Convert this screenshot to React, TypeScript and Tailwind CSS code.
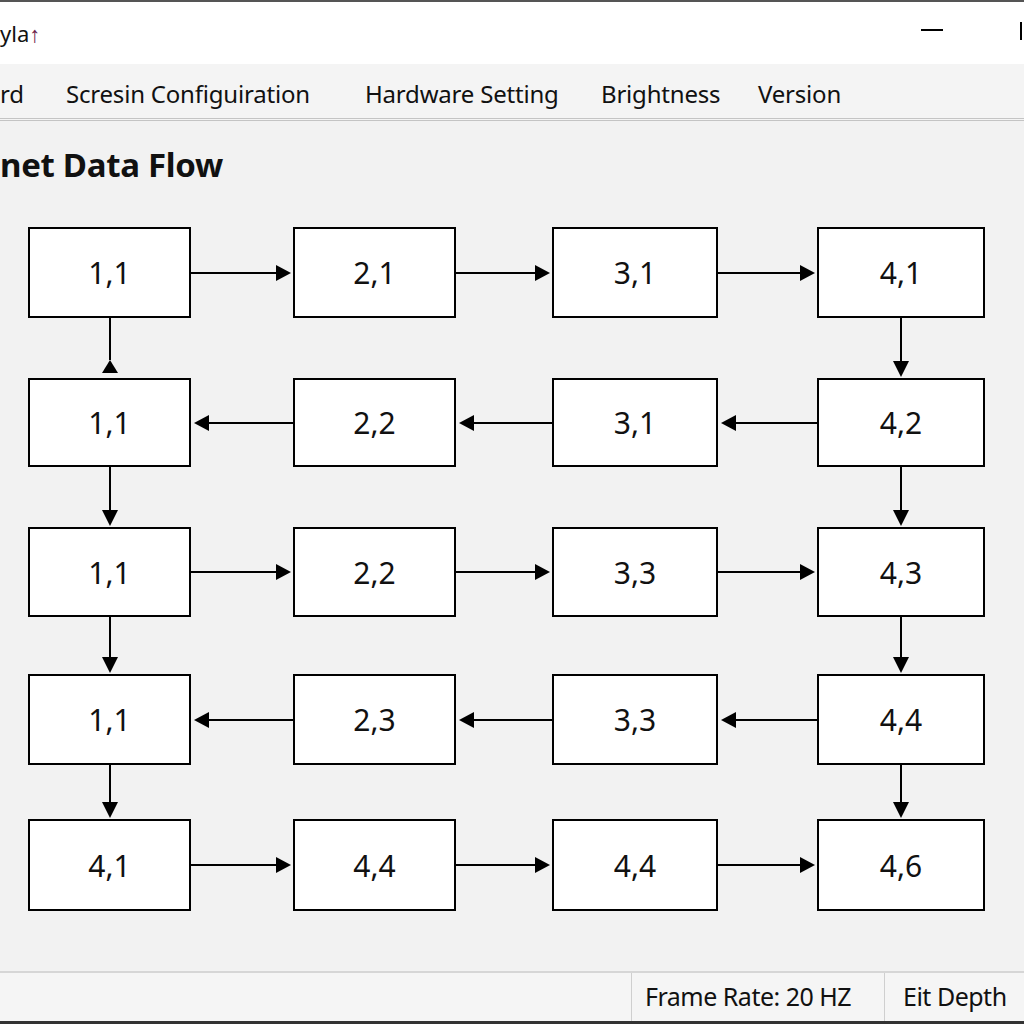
import React from 'react';

type Dir = 'left' | 'right' | 'down' | 'up' | 'none';

// 5 rows x 4 columns of cells, with the arrow between neighbours
const ROWS = [
  { cells: ['1,1', '2,1', '3,1', '4,1'], flow: 'right' as Dir },
  { cells: ['1,1', '2,2', '3,1', '4,2'], flow: 'left' as Dir },
  { cells: ['1,1', '2,2', '3,3', '4,3'], flow: 'right' as Dir },
  { cells: ['1,1', '2,3', '3,3', '4,4'], flow: 'left' as Dir },
  { cells: ['4,1', '4,4', '4,4', '4,6'], flow: 'right' as Dir },
];

// vertical links below each row: [first column, last column]
const LINKS: [Dir, Dir][] = [
  ['up', 'down'],
  ['down', 'down'],
  ['down', 'down'],
  ['down', 'down'],
];

const ROW_H = ['h-[91px]', 'h-[89px]', 'h-[90px]', 'h-[91px]', 'h-[92px]'];
const GAP_H = ['h-[60px]', 'h-[60px]', 'h-[57px]', 'h-[54px]'];

function HArrow({ dir }: { dir: Dir }) {
  return (
    <div className="flex items-center h-full">
      {dir === 'left' && (
        <div className="w-0 h-0 border-y-[8px] border-y-transparent border-r-[15px] border-r-black ml-[3px]" />
      )}
      <div className="flex-1 h-[2px] bg-black" />
      {dir === 'right' && (
        <div className="w-0 h-0 border-y-[8px] border-y-transparent border-l-[15px] border-l-black mr-[2px]" />
      )}
    </div>
  );
}

function VArrow({ dir }: { dir: Dir }) {
  return (
    <div className="flex flex-col items-center h-full">
      <div className="flex-1 w-[2px] bg-black" />
      {dir === 'up' && (
        <div className="w-0 h-0 border-x-[8px] border-x-transparent border-b-[13px] border-b-black mb-[5px]" />
      )}
      {dir === 'down' && (
        <div className="w-0 h-0 border-x-[8px] border-x-transparent border-t-[16px] border-t-black mb-[1px]" />
      )}
    </div>
  );
}

function Cell({ label }: { label: string }) {
  return (
    <div className="h-full bg-white border-2 border-black flex items-center justify-center text-[30px] text-[#111]">
      {label}
    </div>
  );
}

export default function App() {
  return (
    <div className="w-[1024px] h-[1024px] overflow-hidden flex flex-col bg-[#f2f2f2] font-['Noto_Sans',sans-serif] text-[#111]">
      {/* title bar */}
      <div className="h-[64px] bg-white border-t-2 border-[#555] flex items-center shrink-0">
        <span className="text-[22px] leading-none -mt-[1px]">
          yla<span className="text-[#6b1d4a]">↑</span>
        </span>
        <div className="ml-auto flex items-center">
          <div className="w-[22px] h-[2px] bg-black mr-[77px] -mt-[6px]" />
          <div className="w-[4px] h-[18px] border-l-2 border-black -mt-[4px]" />
        </div>
      </div>

      {/* menu bar */}
      <div className="h-[57px] pt-[5px] bg-[#f4f4f4] border-b-[3px] border-double border-[#c4c4c4] shrink-0 grid grid-cols-[66px_299px_236px_157px_auto] items-center text-[24px] tracking-[-0.2px]">
        <span>rd</span>
        <span>Scresin Configuiration</span>
        <span>Hardware Setting</span>
        <span>Brightness</span>
        <span>Version</span>
      </div>

      {/* data flow panel */}
      <div className="flex-1 flex flex-col">
        <h1 className="text-[33px] font-bold leading-none pt-[27px] tracking-[-0.3px]">net Data Flow</h1>

        <div className="mt-[46px] ml-[28px] grid grid-cols-[163px_102px_163px_96px_166px_99px_168px]">
          {ROWS.map((row, r) => (
            <React.Fragment key={r}>
              {row.cells.map((c, i) => (
                <React.Fragment key={i}>
                  <div className={ROW_H[r]}>
                    <Cell label={c} />
                  </div>
                  {i < 3 && (
                    <div className={ROW_H[r]}>
                      <HArrow dir={row.flow} />
                    </div>
                  )}
                </React.Fragment>
              ))}
              {r < LINKS.length && (
                <>
                  <div className={GAP_H[r]}>
                    <VArrow dir={LINKS[r][0]} />
                  </div>
                  <div className="col-span-5" />
                  <div className={GAP_H[r]}>
                    <VArrow dir={LINKS[r][1]} />
                  </div>
                </>
              )}
            </React.Fragment>
          ))}
        </div>
      </div>

      {/* status bar */}
      <div className="h-[53px] shrink-0 bg-[#f5f5f5] border-t-2 border-[#d6d6d6] border-b-[3px] border-b-[#333] flex text-[25px] tracking-[-0.5px]">
        <div className="w-[632px] border-r border-[#cfcfcf]" />
        <div className="w-[253px] border-r border-[#cfcfcf] pl-[13px] flex items-center">Frame Rate: 20 HZ</div>
        <div className="pl-[18px] flex items-center whitespace-nowrap">Eit Depth</div>
      </div>
    </div>
  );
}
